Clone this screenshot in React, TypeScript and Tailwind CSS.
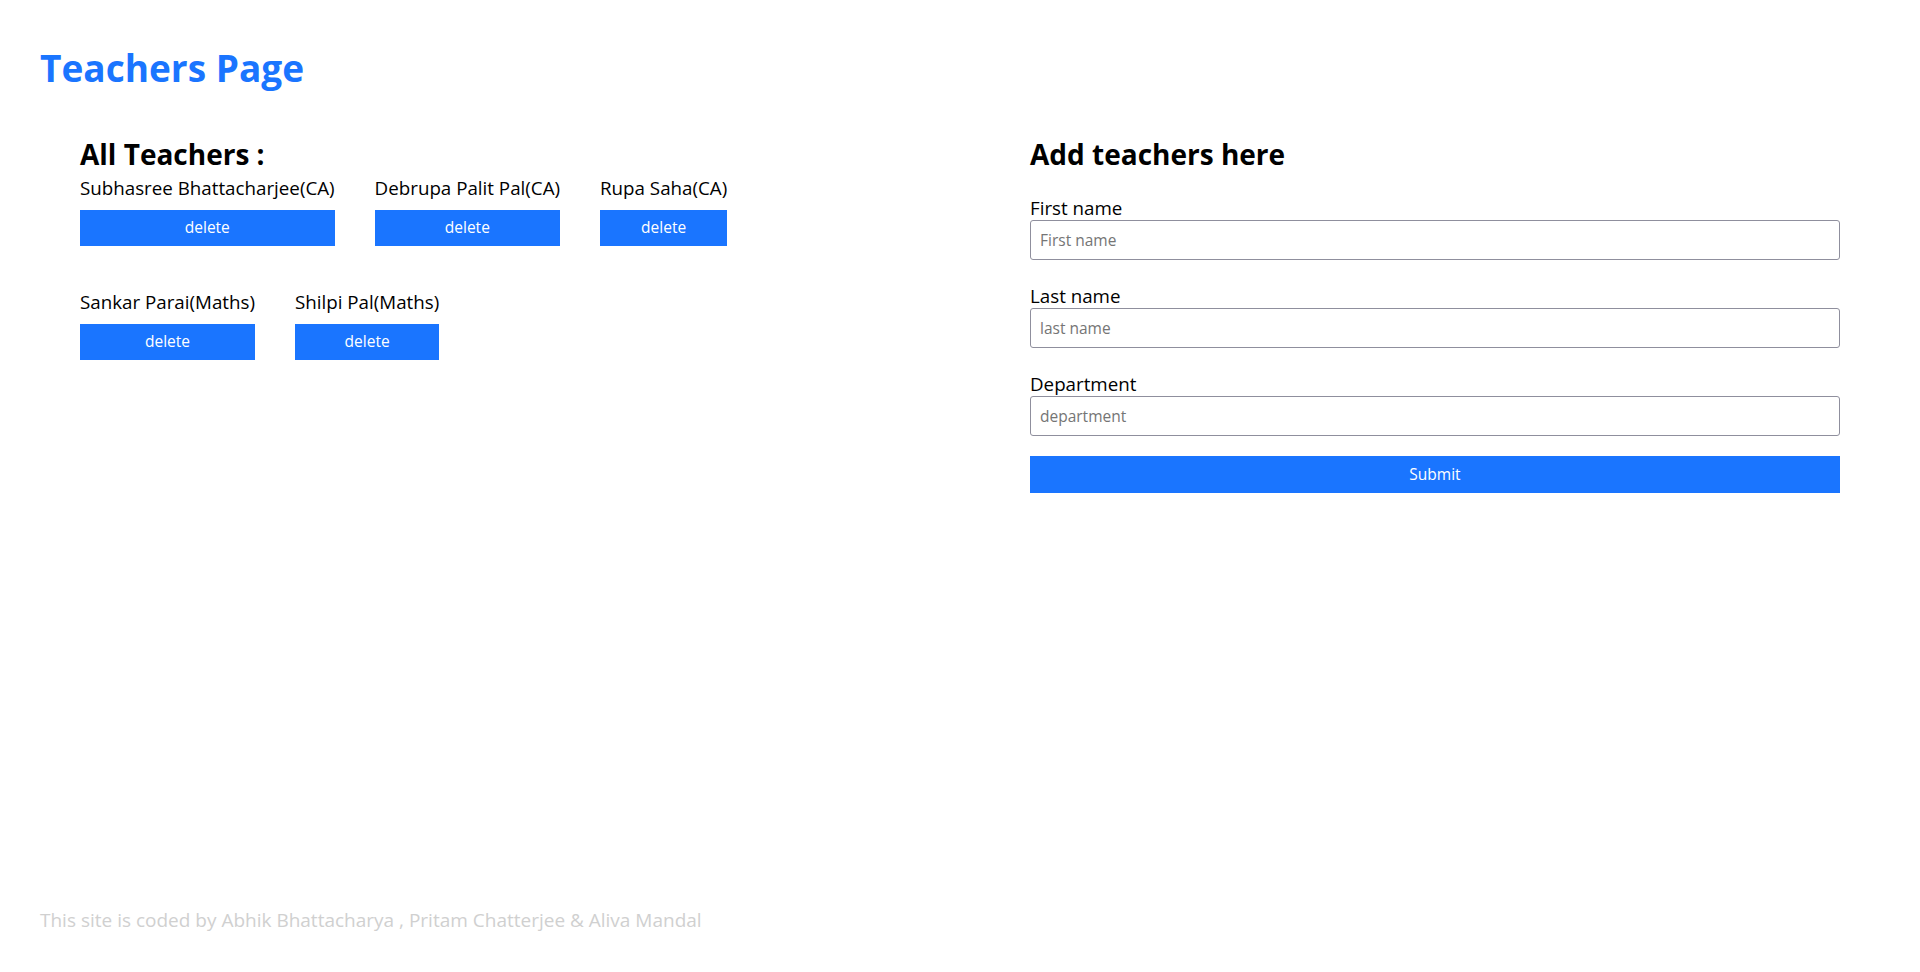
const teachers = [
  [
    { id: 1, name: 'Subhasree Bhattacharjee', dept: 'CA' },
    { id: 2, name: 'Debrupa Palit Pal', dept: 'CA' },
    { id: 3, name: 'Rupa Saha', dept: 'CA' },
  ],
  [
    { id: 4, name: 'Sankar Parai', dept: 'Maths' },
    { id: 5, name: 'Shilpi Pal', dept: 'Maths' },
  ],
];

const fields = [
  { label: 'First name', placeholder: 'First name' },
  { label: 'Last name', placeholder: 'last name' },
  { label: 'Department', placeholder: 'department' },
];

export default function App() {
  return (
    <div className="h-screen flex flex-col bg-white text-black font-['Open_Sans',sans-serif]">
      <h1 className="pt-11 px-10 text-[37px] leading-[48px] font-bold text-[#1a75ff]">Teachers Page</h1>

      <div className="mt-11 px-20 flex">
        {/* list of teachers */}
        <div className="flex-1">
          <h2 className="text-[28px] leading-[36px] font-bold">All Teachers :</h2>
          {teachers.map((group, i) => (
            <div key={i} className="flex items-start gap-10 mt-px">
              {group.map((t) => (
                <div key={t.id} className="flex flex-col mb-10">
                  <span className="text-[18.75px] leading-[30px] whitespace-nowrap">
                    {t.name}({t.dept})
                  </span>
                  <button className="mt-[7px] h-9 w-full bg-[#1a75ff] text-white text-[15.5px]">delete</button>
                </div>
              ))}
            </div>
          ))}
        </div>

        {/* add form */}
        <div className="w-[810px]">
          <h2 className="text-[28px] leading-[36px] font-bold">Add teachers here</h2>
          <form className="mt-6 flex flex-col" onSubmit={(e) => e.preventDefault()}>
            {fields.map((f) => (
              <div key={f.label} className="flex flex-col mb-6">
                <label className="text-[18.75px] leading-[24px]">{f.label}</label>
                <input
                  type="text"
                  placeholder={f.placeholder}
                  className="h-10 px-[9px] border border-[#8f8f9d] rounded-[3px] text-[15.5px] placeholder:text-[#757575] outline-none"
                />
              </div>
            ))}
            <button type="submit" className="-mt-1 h-[37px] bg-[#1a75ff] text-white text-[15.5px]">
              Submit
            </button>
          </form>
        </div>
      </div>

      <footer className="mt-auto px-10 pb-10 text-[19px] leading-[24px] text-[#d0d0d0]">
        This site is coded by Abhik Bhattacharya , Pritam Chatterjee &amp; Aliva Mandal
      </footer>
    </div>
  );
}
